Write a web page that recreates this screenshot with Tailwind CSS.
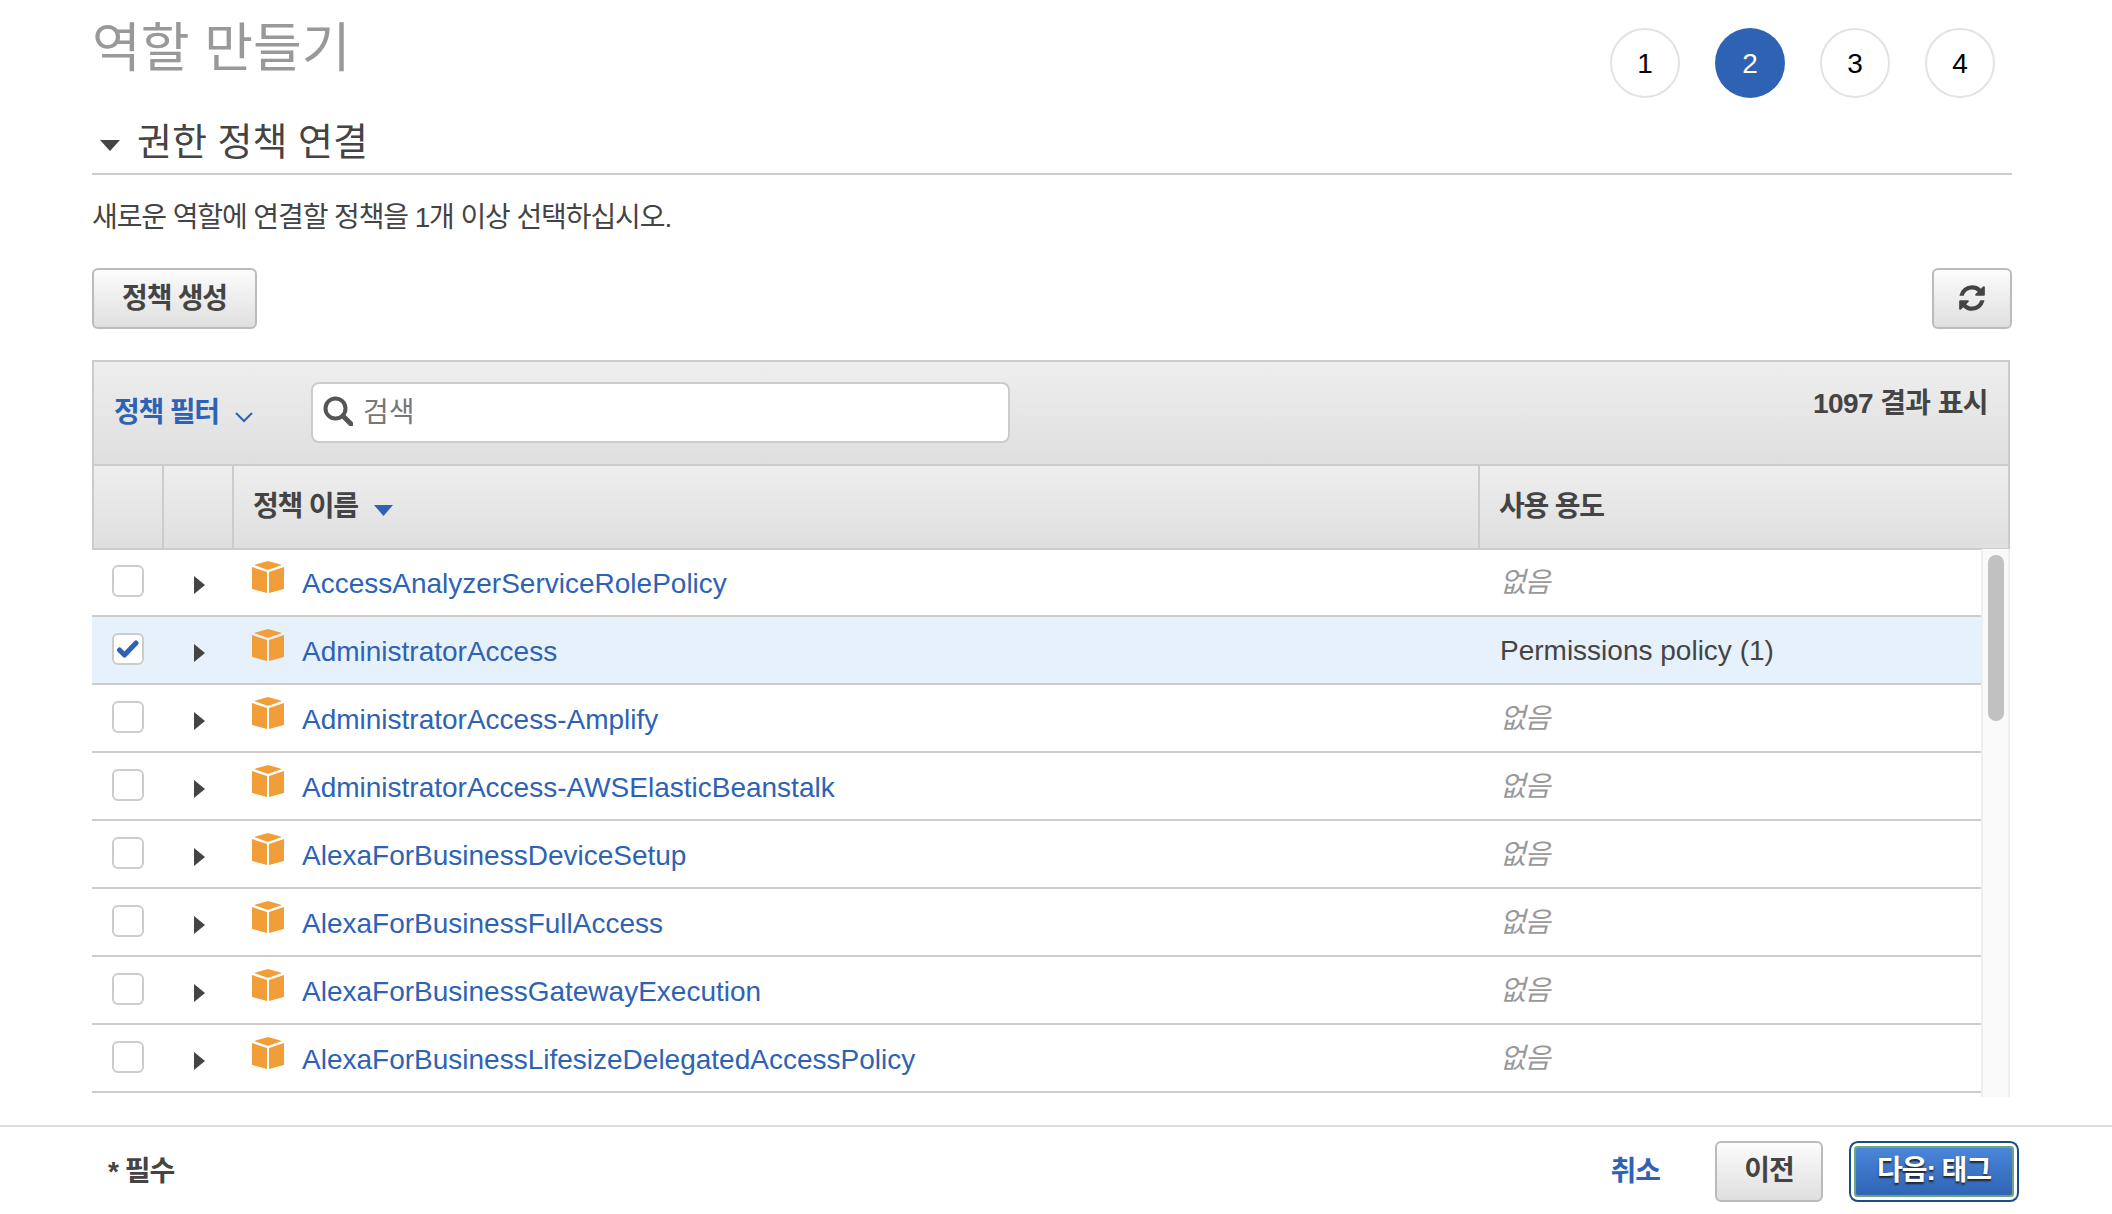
<!DOCTYPE html>
<html lang="ko">
<head>
  <meta charset="UTF-8" />
  <title>역할 만들기</title>
  <script src="https://cdn.jsdelivr.net/npm/@tailwindcss/browser@4"></script>
</head>
<body class="w-[2112px] h-[1214px] overflow-hidden bg-white text-[#444] text-[28px] font-['Liberation_Sans','Noto_Sans_CJK_KR',sans-serif] flex flex-col">

  <main class="h-[1125px] pl-[92px] pr-[100px] overflow-hidden">
    <!-- title + steps -->
    <div class="h-[104px] flex justify-between">
      <h1 class="mt-[23px] text-[53px] leading-[52px] text-[#999]">역할 만들기</h1>
      <div class="mt-[28px] mr-[17px] flex gap-[35px] text-black">
        <div class="w-[70px] h-[70px] pt-[2px] rounded-full border-2 border-[#e3e3e3] flex items-center justify-center">1</div>
        <div class="w-[70px] h-[70px] pt-[2px] rounded-full bg-[#2e63b4] text-white flex items-center justify-center">2</div>
        <div class="w-[70px] h-[70px] pt-[2px] rounded-full border-2 border-[#e3e3e3] flex items-center justify-center">3</div>
        <div class="w-[70px] h-[70px] pt-[2px] rounded-full border-2 border-[#e3e3e3] flex items-center justify-center">4</div>
      </div>
    </div>

    <h2 class="h-[71px] pt-[7px] border-b-2 border-[#ccc] flex items-center text-[38px] text-[#444]">
      <svg class="ml-[8px] mt-[6px] mr-[17px]" width="20" height="11" viewBox="0 0 20 11"><path d="M0 0h20L10 11z" fill="#444"/></svg>
      권한 정책 연결
    </h2>

    <p class="mt-[23px] h-[40px] leading-[40px] tracking-[-1.1px]">새로운 역할에 연결할 정책을 1개 이상 선택하십시오.</p>

    <div class="mt-[30px] flex justify-between">
      <button class="w-[165px] h-[61px] rounded-[6px] border-2 border-[#bbb] bg-gradient-to-b from-[#fcfcfc] to-[#dfdfdf] font-bold tracking-[-1.2px]">정책 생성</button>
      <button class="w-[80px] h-[61px] rounded-[6px] border-2 border-[#bbb] bg-gradient-to-b from-[#fcfcfc] to-[#dfdfdf] flex items-center justify-center">
        <svg class="mb-[2px]" width="30" height="30" viewBox="0 0 1792 1792" fill="#444"><path d="M1639 1056q0 5-1 7-64 268-268 434.500t-478 166.500q-146 0-282.500-55t-243.500-157l-129 129q-19 19-45 19t-45-19-19-45v-448q0-26 19-45t45-19h448q26 0 45 19t19 45-19 45l-137 137q71 66 161 102t187 36q134 0 250-65t186-179q11-17 53-117 8-23 30-23h192q13 0 22.500 9.500t9.500 22.500zm25-800v448q0 26-19 45t-45 19h-448q-26 0-45-19t-19-45 19-45l138-138q-148-137-349-137-134 0-250 65t-186 179q-11 17-53 117-8 23-30 23h-199q-13 0-22.500-9.500t-9.500-22.500v-7q65-268 270-434.500t480-166.500q146 0 284 55.500t245 156.500l130-129q19-19 45-19t45 19 19 45z"/></svg>
      </button>
    </div>

    <!-- table -->
    <div class="mt-[31px] w-[1918px]">
      <div class="h-[106px] border-2 border-[#ccc] bg-gradient-to-b from-[#eee] to-[#dfdfdf] flex">
        <div class="w-[217px] pl-[20px] flex items-center font-bold text-[#2e63b4] tracking-[-1.2px]">
          정책 필터
          <svg class="ml-[16px] mt-[8px]" width="18" height="11" viewBox="0 0 18 11"><path d="M1 1l8 8 8-8" fill="none" stroke="#2e63b4" stroke-width="2"/></svg>
        </div>
        <div class="w-[699px] h-[61px] mt-[20px] rounded-[8px] border-2 border-[#ccc] bg-white flex items-center pl-[10px] text-[#777]">
          <svg class="mr-[10px] mb-[3px]" width="30" height="30" viewBox="0 0 30 30" fill="none" stroke="#555"><circle cx="12.500" cy="12.500" r="10" stroke-width="4"/><path d="M20 20l8 8" stroke-width="5" stroke-linecap="round"/></svg>
          검색
        </div>
        <div class="flex-1 pt-[21px] pr-[20px] text-right font-bold tracking-[-0.6px]">1097 결과 표시</div>
      </div>

      <div class="h-[86px] -mt-[2px] border-2 border-[#ccc] bg-gradient-to-b from-[#eee] to-[#dfdfdf] flex font-bold">
        <div class="w-[70px] border-r-2 border-[#ccc]"></div>
        <div class="w-[70px] border-r-2 border-[#ccc]"></div>
        <div class="w-[1246px] border-r-2 border-[#ccc] pl-[19px] flex items-center tracking-[-1.2px]">
          정책 이름
          <svg class="ml-[16px] mt-[6px]" width="19" height="11" viewBox="0 0 19 11"><path d="M0 0h19L9.500 11z" fill="#2e63b4"/></svg>
        </div>
        <div class="flex-1 pl-[19px] flex items-center tracking-[-1.2px]">사용 용도</div>
      </div>

      <div class="h-[548px] flex -mt-[1px]">
        <div class="w-[1889px]">
          <div class="h-[68px] border-b-2 border-[#ccc] flex items-center">
            <div class="w-[71px] pl-[20px] mb-[3px]"><div class="w-[32px] h-[32px] rounded-[6px] border-2 border-[#ccc] bg-white"></div></div>
            <div class="w-[70px] pl-[31px] mt-[5px]"><svg width="11" height="18" viewBox="0 0 11 18"><path d="M0 0l11 9-11 9z" fill="#444"/></svg></div>
            <div class="w-[1246px] pl-[19px] flex items-center">
              <svg class="mb-[11px] mr-[18px]" width="32" height="32" viewBox="0 0 32 32"><path d="M16 0l14 4-14 5L2 4z" fill="#f19e38"/><path d="M0 6l15 5v21L0 28zM32 6l-15 5v21l15-4z" fill="#f19e38"/></svg>
              <a class="text-[#2e63b4] mt-[3px]">AccessAnalyzerServiceRolePolicy</a>
            </div>
            <div class="pl-[21px] mt-[2px] italic text-[#999] tracking-[-1px]">없음</div>
          </div>
          <div class="h-[68px] border-b-2 border-[#ccc] bg-[#e6f1fc] flex items-center">
            <div class="w-[71px] pl-[20px] mb-[3px]"><div class="w-[32px] h-[32px] rounded-[6px] border-2 border-[#ccc] bg-white flex items-center justify-center"><svg width="24" height="20" viewBox="0 0 24 20"><path d="M3.500 11l5 5L20 4" fill="none" stroke="#2e63b4" stroke-width="5" stroke-linecap="round" stroke-linejoin="round"/></svg></div></div>
            <div class="w-[70px] pl-[31px] mt-[5px]"><svg width="11" height="18" viewBox="0 0 11 18"><path d="M0 0l11 9-11 9z" fill="#444"/></svg></div>
            <div class="w-[1246px] pl-[19px] flex items-center">
              <svg class="mb-[11px] mr-[18px]" width="32" height="32" viewBox="0 0 32 32"><path d="M16 0l14 4-14 5L2 4z" fill="#f19e38"/><path d="M0 6l15 5v21L0 28zM32 6l-15 5v21l15-4z" fill="#f19e38"/></svg>
              <a class="text-[#2e63b4] mt-[3px]">AdministratorAccess</a>
            </div>
            <div class="pl-[21px] mt-[2px]">Permissions policy (1)</div>
          </div>
          <div class="h-[68px] border-b-2 border-[#ccc] flex items-center">
            <div class="w-[71px] pl-[20px] mb-[3px]"><div class="w-[32px] h-[32px] rounded-[6px] border-2 border-[#ccc] bg-white"></div></div>
            <div class="w-[70px] pl-[31px] mt-[5px]"><svg width="11" height="18" viewBox="0 0 11 18"><path d="M0 0l11 9-11 9z" fill="#444"/></svg></div>
            <div class="w-[1246px] pl-[19px] flex items-center">
              <svg class="mb-[11px] mr-[18px]" width="32" height="32" viewBox="0 0 32 32"><path d="M16 0l14 4-14 5L2 4z" fill="#f19e38"/><path d="M0 6l15 5v21L0 28zM32 6l-15 5v21l15-4z" fill="#f19e38"/></svg>
              <a class="text-[#2e63b4] mt-[3px]">AdministratorAccess-Amplify</a>
            </div>
            <div class="pl-[21px] mt-[2px] italic text-[#999] tracking-[-1px]">없음</div>
          </div>
          <div class="h-[68px] border-b-2 border-[#ccc] flex items-center">
            <div class="w-[71px] pl-[20px] mb-[3px]"><div class="w-[32px] h-[32px] rounded-[6px] border-2 border-[#ccc] bg-white"></div></div>
            <div class="w-[70px] pl-[31px] mt-[5px]"><svg width="11" height="18" viewBox="0 0 11 18"><path d="M0 0l11 9-11 9z" fill="#444"/></svg></div>
            <div class="w-[1246px] pl-[19px] flex items-center">
              <svg class="mb-[11px] mr-[18px]" width="32" height="32" viewBox="0 0 32 32"><path d="M16 0l14 4-14 5L2 4z" fill="#f19e38"/><path d="M0 6l15 5v21L0 28zM32 6l-15 5v21l15-4z" fill="#f19e38"/></svg>
              <a class="text-[#2e63b4] mt-[3px]">AdministratorAccess-AWSElasticBeanstalk</a>
            </div>
            <div class="pl-[21px] mt-[2px] italic text-[#999] tracking-[-1px]">없음</div>
          </div>
          <div class="h-[68px] border-b-2 border-[#ccc] flex items-center">
            <div class="w-[71px] pl-[20px] mb-[3px]"><div class="w-[32px] h-[32px] rounded-[6px] border-2 border-[#ccc] bg-white"></div></div>
            <div class="w-[70px] pl-[31px] mt-[5px]"><svg width="11" height="18" viewBox="0 0 11 18"><path d="M0 0l11 9-11 9z" fill="#444"/></svg></div>
            <div class="w-[1246px] pl-[19px] flex items-center">
              <svg class="mb-[11px] mr-[18px]" width="32" height="32" viewBox="0 0 32 32"><path d="M16 0l14 4-14 5L2 4z" fill="#f19e38"/><path d="M0 6l15 5v21L0 28zM32 6l-15 5v21l15-4z" fill="#f19e38"/></svg>
              <a class="text-[#2e63b4] mt-[3px]">AlexaForBusinessDeviceSetup</a>
            </div>
            <div class="pl-[21px] mt-[2px] italic text-[#999] tracking-[-1px]">없음</div>
          </div>
          <div class="h-[68px] border-b-2 border-[#ccc] flex items-center">
            <div class="w-[71px] pl-[20px] mb-[3px]"><div class="w-[32px] h-[32px] rounded-[6px] border-2 border-[#ccc] bg-white"></div></div>
            <div class="w-[70px] pl-[31px] mt-[5px]"><svg width="11" height="18" viewBox="0 0 11 18"><path d="M0 0l11 9-11 9z" fill="#444"/></svg></div>
            <div class="w-[1246px] pl-[19px] flex items-center">
              <svg class="mb-[11px] mr-[18px]" width="32" height="32" viewBox="0 0 32 32"><path d="M16 0l14 4-14 5L2 4z" fill="#f19e38"/><path d="M0 6l15 5v21L0 28zM32 6l-15 5v21l15-4z" fill="#f19e38"/></svg>
              <a class="text-[#2e63b4] mt-[3px]">AlexaForBusinessFullAccess</a>
            </div>
            <div class="pl-[21px] mt-[2px] italic text-[#999] tracking-[-1px]">없음</div>
          </div>
          <div class="h-[68px] border-b-2 border-[#ccc] flex items-center">
            <div class="w-[71px] pl-[20px] mb-[3px]"><div class="w-[32px] h-[32px] rounded-[6px] border-2 border-[#ccc] bg-white"></div></div>
            <div class="w-[70px] pl-[31px] mt-[5px]"><svg width="11" height="18" viewBox="0 0 11 18"><path d="M0 0l11 9-11 9z" fill="#444"/></svg></div>
            <div class="w-[1246px] pl-[19px] flex items-center">
              <svg class="mb-[11px] mr-[18px]" width="32" height="32" viewBox="0 0 32 32"><path d="M16 0l14 4-14 5L2 4z" fill="#f19e38"/><path d="M0 6l15 5v21L0 28zM32 6l-15 5v21l15-4z" fill="#f19e38"/></svg>
              <a class="text-[#2e63b4] mt-[3px]">AlexaForBusinessGatewayExecution</a>
            </div>
            <div class="pl-[21px] mt-[2px] italic text-[#999] tracking-[-1px]">없음</div>
          </div>
          <div class="h-[68px] border-b-2 border-[#ccc] flex items-center">
            <div class="w-[71px] pl-[20px] mb-[3px]"><div class="w-[32px] h-[32px] rounded-[6px] border-2 border-[#ccc] bg-white"></div></div>
            <div class="w-[70px] pl-[31px] mt-[5px]"><svg width="11" height="18" viewBox="0 0 11 18"><path d="M0 0l11 9-11 9z" fill="#444"/></svg></div>
            <div class="w-[1246px] pl-[19px] flex items-center">
              <svg class="mb-[11px] mr-[18px]" width="32" height="32" viewBox="0 0 32 32"><path d="M16 0l14 4-14 5L2 4z" fill="#f19e38"/><path d="M0 6l15 5v21L0 28zM32 6l-15 5v21l15-4z" fill="#f19e38"/></svg>
              <a class="text-[#2e63b4] mt-[3px]">AlexaForBusinessLifesizeDelegatedAccessPolicy</a>
            </div>
            <div class="pl-[21px] mt-[2px] italic text-[#999] tracking-[-1px]">없음</div>
          </div>
        </div>
        <!-- scrollbar -->
        <div class="w-[29px] bg-[#f9f9f9] border-x-2 border-[#eee] pt-[6px] pl-[5px]">
          <div class="w-[16px] h-[166px] rounded-full bg-[#c1c1c1]"></div>
        </div>
      </div>
    </div>
  </main>

  <footer class="h-[89px] pt-[1px] border-t-2 border-[#ddd] pl-[108px] pr-[93px] flex items-center justify-between font-bold tracking-[-1px]">
    <span class="mt-[2px]">* 필수</span>
    <div class="flex items-center">
      <a class="text-[#2e63b4] mr-[55px] mt-[2px]">취소</a>
      <button class="w-[108px] h-[61px] rounded-[6px] border-2 border-[#bbb] bg-gradient-to-b from-[#fcfcfc] to-[#dfdfdf] mr-[26px]">이전</button>
      <button class="w-[160px] h-[51px] mx-[5px] rounded-[4px] border-2 border-[#6fa57a] bg-gradient-to-b from-[#4a86db] to-[#2f65b4] text-white shadow-[0_0_0_3px_#fff,0_0_0_5px_#1c4b8c] [text-shadow:0_2px_2px_#222]">다음: 태그</button>
    </div>
  </footer>

</body>
</html>
